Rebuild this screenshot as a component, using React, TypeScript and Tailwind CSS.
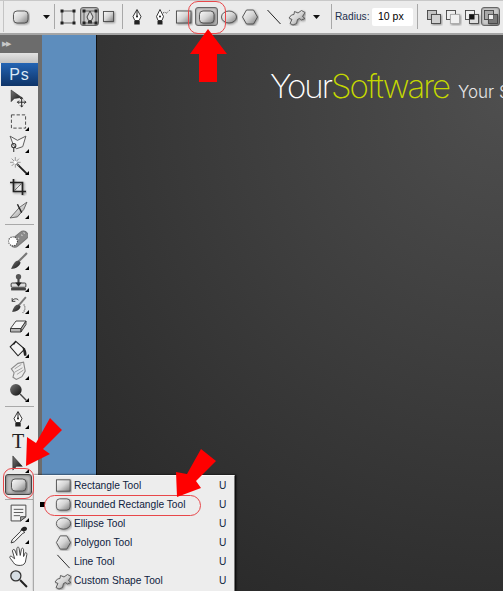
import React from "react";

const Defs = () => (
  <svg width="0" height="0" className="absolute">
    <defs>
      <linearGradient id="sh" x1="0" y1="0" x2="1" y2="1">
        <stop offset="0" stopColor="#fbfbfb" />
        <stop offset="0.5" stopColor="#d4d4d4" />
        <stop offset="1" stopColor="#7d7d7d" />
      </linearGradient>
      <linearGradient id="dk" x1="0" y1="0" x2="1" y2="1">
        <stop offset="0" stopColor="#777" />
        <stop offset="1" stopColor="#111" />
      </linearGradient>
    </defs>
  </svg>
);

type IP = { s?: number };
const Ic = ({ s = 18, children }: { s?: number; children: React.ReactNode }) => (
  <svg width={s} height={s} viewBox="0 0 18 18" className="block shrink-0">
    {children}
  </svg>
);
const sd = { filter: "drop-shadow(1px 1px 1px rgba(0,0,0,.4))" };
const edge = "#4a4a4a";

const RoundRect = ({ s = 18 }: IP) => (
  <Ic s={s}><rect x="1.500" y="3" width="14.500" height="12" rx="3.500" fill="url(#sh)" stroke={edge} strokeWidth=".9" style={sd} /></Ic>
);
const Rect = ({ s = 18 }: IP) => (
  <Ic s={s}><rect x="1.500" y="3" width="14.500" height="12" fill="url(#sh)" stroke={edge} strokeWidth=".9" style={sd} /></Ic>
);
const Ellipse = ({ s = 18 }: IP) => (
  <Ic s={s}><ellipse cx="9" cy="9" rx="7.500" ry="6" fill="url(#sh)" stroke={edge} strokeWidth=".9" style={sd} /></Ic>
);
const Polygon = ({ s = 18 }: IP) => (
  <Ic s={s}><path d="M5.500 2h7L16.500 9l-4 7h-7L1.500 9z" fill="url(#sh)" stroke={edge} strokeWidth=".9" style={sd} /></Ic>
);
const Line = ({ s = 18 }: IP) => (
  <Ic s={s}><path d="M2.500 2L15.500 16" stroke="#222" strokeWidth="1" /></Ic>
);
const Custom = ({ s = 18 }: IP) => (
  <Ic s={s}><path d="M6.500 3.500l3.500 1.500 3.500-2.500 3.500 2-2.500 4 2.500 2-3.500 1.500-2-1.500-2 1-1 4-3.500 1.500-3-1.500 2-4-3-1.500 2.500-3 2.500-.5z" fill="url(#sh)" stroke="#555" strokeWidth=".9" style={sd} /></Ic>
);
const Pen = ({ s = 18 }: IP) => (
  <Ic s={s}>
    <path d="M9 1.500L5 8.500 6.800 12.500h4.400L13 8.500z" fill="#fff" stroke="#222" strokeWidth=".9" />
    <path d="M9 2v6" stroke="#222" />
    <circle cx="9" cy="8.500" r="1" fill="#111" />
    <rect x="6.300" y="13" width="5.400" height="3.500" fill="#222" />
  </Ic>
);
const Freeform = () => (
  <Ic>
    <path d="M7 1.500L3.500 8.500 5 12.500h4l1.500-4z" fill="#fff" stroke="#222" strokeWidth=".9" />
    <circle cx="7" cy="8.500" r="1" fill="#111" />
    <rect x="4.500" y="13" width="5" height="3.500" fill="#222" />
    <path d="M10 5l2-1 1 1.500 4-3.500" stroke="#444" strokeDasharray="1 1" fill="none" />
  </Ic>
);
const Caret = () => (
  <svg width="7" height="4" viewBox="0 0 7 4" className="block"><path d="M0 0h7L3.500 4z" fill="#111" /></svg>
);
const handles = [[1.500, 1.500], [13.500, 1.500], [1.500, 13.500], [13.500, 13.500]];
const TransformA = () => (
  <Ic>
    <rect x="3" y="3" width="12" height="12" fill="#e4e4e4" stroke="#555" strokeWidth=".9" />
    {handles.map(([x, y], i) => <rect key={i} x={x} y={y} width="3" height="3" fill="#222" />)}
  </Ic>
);
const TransformB = () => (
  <Ic>
    <rect x="3" y="3" width="12" height="12" fill="none" stroke="#555" strokeWidth=".9" />
    <path d="M9 3L6 9l1.500 3.500h3L12 9z" fill="#ddd" stroke="#333" strokeWidth=".9" />
    <rect x="7" y="13" width="4" height="2.500" fill="#333" />
    {handles.map(([x, y], i) => <rect key={i} x={x} y={y} width="3" height="3" fill="#222" />)}
  </Ic>
);
const SquareSm = () => (
  <Ic><rect x="3.500" y="3.500" width="10" height="10" fill="url(#sh)" stroke={edge} strokeWidth=".9" style={sd} /></Ic>
);
const Combine = ({ v }: { v: number }) => (
  <Ic>
    <rect x="2.500" y="2.500" width="9" height="9" fill={v === 0 ? "#c4c4c4" : v === 3 ? "#aaa" : "#eee"} stroke="#444" strokeWidth=".9" />
    <rect x="6.500" y="6.500" width="9" height="9" fill={v === 1 ? "#f0f0f0" : v === 3 ? "#777" : v === 2 ? "#ddd" : "#d0d0d0"} stroke={v === 1 ? "#aaa" : "#444"} strokeWidth=".9" style={sd} />
    {v === 2 && <rect x="6.500" y="6.500" width="5" height="5" fill="#111" />}
    {v === 3 && <rect x="6.500" y="6.500" width="5" height="5" fill="#eee" stroke="#333" strokeWidth=".6" />}
  </Ic>
);

const Slot = ({ w, children, sel }: { w: string; children: React.ReactNode; sel?: boolean }) => (
  <div className={`flex h-full items-center justify-center ${w}`}>
    {sel ? (
      <div className="flex h-[19px] w-full items-center justify-center rounded-[3px] border border-[#666] bg-[#c9c9c9] shadow-[inset_0_0_2px_#666]">{children}</div>
    ) : children}
  </div>
);
const Sep = () => <div className="h-[25px] w-px shrink-0 bg-[#a8a8a8]" />;

const Small = () => (
  <span className="absolute bottom-[1px] right-[9px] h-0 w-0 border-b-[4px] border-l-[4px] border-b-black border-l-transparent" />
);

const Tool = ({ h, children, more = true }: { h: string; children: React.ReactNode; more?: boolean }) => (
  <div className={`relative flex w-full items-center justify-center pr-[2px] ${h}`}>
    {children}
    {more && <Small />}
  </div>
);
const ToolSep = ({ m }: { m: string }) => <div className={`ml-[5px] mr-[4px] h-px shrink-0 bg-[#a9a9a9] ${m}`} />;

const MoveIcon = () => (
  <Ic s={19}>
    <path d="M2 1v11l3-3 7-1z" fill="url(#dk)" stroke="#222" strokeWidth=".5" />
    <path d="M12 8v9M8 12.500h8M12 8l-1.500 1.500M12 8l1.500 1.500M12 17l-1.500-1.500M12 17l1.500-1.500M8 12.500l1.500-1.500M8 12.500l1.500 1.500M16 12.500l-1.500-1.500M16 12.500l-1.500 1.500" stroke="#222" fill="none" strokeWidth=".9" />
  </Ic>
);
const Marquee = () => (
  <Ic s={17}><rect x="1.500" y="2" width="15" height="14" fill="none" stroke="#444" strokeDasharray="3.500 2" /></Ic>
);
const Lasso = () => (
  <Ic s={19}>
    <path d="M1 2l7 4 8-4-3 10-6 2-3-4z" fill="#f4f4f4" stroke="#555" strokeWidth=".9" />
    <circle cx="4.500" cy="11" r="2" fill="none" stroke="#333" />
    <path d="M4.500 13v4" stroke="#333" />
  </Ic>
);
const Wand = () => (
  <Ic s={19}>
    <path d="M7.500 7.500l9.500 9.500" stroke="#222" strokeWidth="1.800" />
    <path d="M6 1v10M1 6h10M2.500 2.500l7 7M9.500 2.500l-7 7" stroke="#8a8a8a" strokeWidth=".8" />
    <circle cx="6" cy="6" r="1.500" fill="#fff" />
  </Ic>
);
const Crop = () => (
  <Ic s={18}>
    <path d="M1 4.500h12.500v12.500M4.500 1v12.500h12.500" stroke="#222" strokeWidth="1.700" fill="none" style={sd} />
    <path d="M5.500 12.500l7-7" stroke="#555" strokeWidth=".8" />
  </Ic>
);
const Slice = () => (
  <Ic s={19}>
    <path d="M1 17L10 7l7-5-3 7-6 7z" fill="url(#sh)" stroke="#555" strokeWidth=".8" />
    <path d="M8 4l4 8" stroke="#222" strokeWidth="1.300" />
  </Ic>
);
const Heal = () => (
  <Ic s={20}>
    <rect x="1" y="6" width="18" height="8" rx="4" fill="#8a8a8a" stroke="#777" transform="rotate(-40 10 10)" />
    <path d="M6 11l1 1M9 9l1 1M12 6l1 1M14 4l1 1" stroke="#d0d0d0" />
    <circle cx="4.500" cy="12" r="4" fill="#fff" stroke="#444" strokeDasharray="1 1" />
  </Ic>
);
const Brush = () => (
  <Ic s={19}>
    <path d="M17 2L9 10" stroke="#777" strokeWidth="2" />
    <path d="M9 9c-3 0-5 3-7 8 4 0 8-2 9-6z" fill="url(#dk)" />
  </Ic>
);
const Stamp = () => (
  <Ic s={19}>
    <circle cx="9" cy="3.500" r="2.500" fill="#555" />
    <path d="M8 5.500h2v4H8z" fill="#444" />
    <rect x="2" y="9.500" width="14" height="4" rx="1" fill="#ddd" stroke="#333" strokeWidth=".9" />
    <path d="M6 9h6l-3 4z" fill="#222" />
    <rect x="2" y="14" width="14" height="2.500" fill="#444" />
  </Ic>
);
const History = () => (
  <Ic s={19}>
    <path d="M16 2L9 10" stroke="#777" strokeWidth="1.800" />
    <path d="M9 9c-3 0-5 3-6 7 4 0 7-1.500 8-5z" fill="url(#dk)" />
    <path d="M3 6c1-3 5-3 6-1M3 6l3 0M3 6l0-3" stroke="#333" fill="none" strokeWidth=".9" />
    <path d="M14 9c2 3 1 6-1 8" stroke="#444" strokeDasharray="1 1" fill="none" />
  </Ic>
);
const Eraser = () => (
  <Ic s={18}>
    <path d="M7 4h10l-5 7.500H1.500z" fill="#f5f5f5" stroke="#333" strokeWidth=".9" />
    <path d="M1.500 11.500H12V15H1.500zM12 11.500L17 4v3.500L12 15z" fill="#b5b5b5" stroke="#333" strokeWidth=".9" />
  </Ic>
);
const Bucket = () => (
  <Ic s={20}>
    <path d="M7 3l8 7-6 6-7-8z" fill="#f4f4f4" stroke="#222" />
    <path d="M7 3L5 6" stroke="#222" />
    <path d="M13 8c3 1 4 5 3.500 8h-2z" fill="#222" />
  </Ic>
);
const Smudge = () => (
  <Ic s={20}>
    <path d="M14 2l1.500 8-3 5-5 2.500-3-2 1-4L3 8l6-5z" fill="#ececec" stroke="#8a8a8a" />
    <path d="M6 8l6-4M6 11l7-4M8 13l6-4" stroke="#999" strokeWidth=".8" />
  </Ic>
);
const Burn = () => (
  <Ic s={19}>
    <circle cx="6.500" cy="6.500" r="5.500" fill="url(#dk)" />
    <path d="M10.500 10.500l6 6" stroke="#444" strokeWidth="1.300" />
  </Ic>
);
const Arrow = () => (
  <Ic s={17}><path d="M3 1v15l4-4 6 0z" fill="url(#dk)" stroke="#222" strokeWidth=".6" /></Ic>
);
const Notes = () => (
  <Ic s={19}>
    <path d="M2 2h14v11l-5 4H2z" fill="#f2f2f2" stroke="#444" strokeWidth=".9" />
    <path d="M4.500 6h9M4.500 9h9M4.500 12h6" stroke="#555" strokeWidth=".9" />
    <path d="M11 17v-4h5z" fill="#aaa" stroke="#444" strokeWidth=".9" />
  </Ic>
);
const Dropper = () => (
  <Ic s={19}>
    <path d="M12 4l3 3-2 1-8 8-3 1 1-3 8-8z" fill="#f2f2f2" stroke="#333" strokeWidth=".9" />
    <path d="M11 5c1-3 3-4 5-3s1 4-2 4z" fill="#222" />
  </Ic>
);
const Hand = () => (
  <Ic s={20}>
    <path d="M4 10c-2-2-3 0-2 1l3 4c1 2 3 2.500 6 2.500 3 0 5-2 5-5l1-5c0-2-2-2-2 0l-1 2 0-6c0-2-2-2-2 0l-1 5-1-6c0-2-2-2-2 0l0 6-2-5c-1-1-2 0-2 1l2 7z" fill="#fff" stroke="#333" strokeWidth=".8" />
  </Ic>
);
const Zoom = () => (
  <Ic s={19}>
    <circle cx="6.500" cy="6.500" r="4.800" fill="#d5dde3" stroke="#333" strokeWidth="1.200" />
    <path d="M10.500 10.500l6.500 6.500" stroke="#222" strokeWidth="1.900" />
  </Ic>
);

const menu: [string, React.ReactNode][] = [
  ["Rectangle Tool", <Rect s={17} />],
  ["Rounded Rectangle Tool", <RoundRect s={17} />],
  ["Ellipse Tool", <Ellipse s={17} />],
  ["Polygon Tool", <Polygon s={17} />],
  ["Line Tool", <Line s={17} />],
  ["Custom Shape Tool", <Custom s={18} />],
];

export default function App() {
  return (
    <div className="relative flex h-[591px] w-[503px] flex-col overflow-hidden bg-[#333] font-['Liberation_Sans',sans-serif]">
      <Defs />
      {/* options bar */}
      <div className="flex h-[35px] shrink-0 items-center border-t border-b-2 border-t-[#c8c8c8] border-b-[#a5a5a5] bg-[#ebebeb] pb-px">
        <Slot w="w-[4px] border-r border-[#c4c4c4]"><span /></Slot>
        <Slot w="w-[34px]"><RoundRect /></Slot>
        <Slot w="w-[16px]"><Caret /></Slot>
        <Sep />
        <Slot w="w-[25px]"><TransformA /></Slot>
        <Slot w="w-[19px]" sel><TransformB /></Slot>
        <Slot w="w-[19px]"><SquareSm /></Slot>
        <div className="w-[4px]" />
        <Sep />
        <Slot w="w-[28px]"><Pen /></Slot>
        <Slot w="w-[22px]"><Freeform /></Slot>
        <Slot w="w-[22px]"><Rect /></Slot>
        <Slot w="w-[23px]" sel><RoundRect /></Slot>
        <Slot w="w-[21px]"><Ellipse /></Slot>
        <Slot w="w-[22px]"><Polygon /></Slot>
        <Slot w="w-[25px]"><Line /></Slot>
        <Slot w="w-[22px]"><Custom /></Slot>
        <Slot w="w-[17px]"><Caret /></Slot>
        <div className="w-[6px]" />
        <Sep />
        <span className="ml-[3px] w-[37px] text-[10.200px] text-[#1c2f4d]">Radius:</span>
        <div className="flex h-[18px] w-[41px] items-center rounded-[2px] bg-white pl-[6px] text-[10.500px] text-black">10 px</div>
        <div className="w-[4px]" />
        <Sep />
        <div className="w-[6px]" />
        <Slot w="w-[19px]"><Combine v={0} /></Slot>
        <Slot w="w-[19px]"><Combine v={1} /></Slot>
        <Slot w="w-[19px]"><Combine v={2} /></Slot>
        <Slot w="w-[19px]" sel><Combine v={3} /></Slot>
      </div>

      <div className="flex min-h-0 flex-1">
        {/* tool palette */}
        <div className="flex w-[42px] shrink-0 flex-col bg-[#6c6c6c]">
          <div className="flex h-[18px] shrink-0 items-center pl-[2px] text-[7px] tracking-[-1px] text-[#c8c8c8]">▶▶</div>
          <div className="flex w-[38px] flex-1 flex-col bg-[#ececec]">
            <div className="h-[10px] shrink-0 bg-gradient-to-b from-[#e2e2e2] to-[#c2c2c2]" />
            <div className="ml-px flex h-[23px] shrink-0 items-center justify-center bg-gradient-to-b from-[#2364b4] to-[#0e3468] text-[16px] tracking-[1px] text-[#dbe8f6]">Ps</div>
            <Tool h="h-[24px]" more={false}><MoveIcon /></Tool>
            <Tool h="h-[22px]"><Marquee /></Tool>
            <Tool h="h-[22px]"><Lasso /></Tool>
            <Tool h="h-[22px]"><Wand /></Tool>
            <Tool h="h-[22px]" more={false}><Crop /></Tool>
            <Tool h="h-[22px]"><Slice /></Tool>
            <ToolSep m="mt-[4px] mb-[2px]" />
            <Tool h="h-[22px]"><Heal /></Tool>
            <Tool h="h-[22px]"><Brush /></Tool>
            <Tool h="h-[22px]"><Stamp /></Tool>
            <Tool h="h-[22px]"><History /></Tool>
            <Tool h="h-[22px]"><Eraser /></Tool>
            <Tool h="h-[22px]"><Bucket /></Tool>
            <Tool h="h-[22px]"><Smudge /></Tool>
            <Tool h="h-[22px]"><Burn /></Tool>
            <ToolSep m="mt-[3px] mb-[1px]" />
            <Tool h="h-[22px]"><Pen /></Tool>
            <Tool h="h-[22px]" more={false}><span className="font-['Liberation_Serif',serif] text-[20px] leading-none text-[#222]">T</span></Tool>
            <Tool h="h-[22px]"><Arrow /></Tool>
            <div className="ml-[5px] mr-[6px] flex h-[21px] shrink-0 items-center justify-center rounded-[3px] border border-[#444] bg-[#bdbdbd] shadow-[inset_0_0_3px_#555]"><RoundRect /></div>
            <ToolSep m="mt-[4px] mb-[1px]" />
            <Tool h="h-[22px]"><Notes /></Tool>
            <Tool h="h-[22px]"><Dropper /></Tool>
            <Tool h="h-[22px]" more={false}><Hand /></Tool>
            <Tool h="h-[22px]" more={false}><Zoom /></Tool>
          </div>
        </div>
        {/* blue strip */}
        <div className="w-[55px] shrink-0 border-r border-[#111] bg-[#5d8dbd]" />
        {/* dark document */}
        <div className="min-w-0 flex-1 overflow-hidden bg-[radial-gradient(ellipse_560px_570px_at_100%_12%,#4e4e4e_0%,#3d3d3d_48%,#2a2a2a_100%)] pl-[173px] pt-[30px]">
          <div className="flex items-baseline whitespace-nowrap font-['Inter',sans-serif] font-extralight text-white">
            <span className="text-[33px] leading-[42px] tracking-[-2px]">Your</span>
            <span className="text-[33px] leading-[42px] tracking-[-2px] text-[#c5d800]">Software</span>
            <span className="ml-[9px] text-[17px] font-light text-[#e6e6e6]">Your S</span>
          </div>
        </div>
      </div>

      {/* flyout menu */}
      <div className="absolute left-[33px] top-[475px] h-[116px] w-[202px] border-t border-l border-r border-t-[#fafafa] border-r-[#777] border-l-[#aaa] bg-[#ededed] shadow-[1px_0_2px_#000]">
        <div className="flex flex-col">
          {menu.map(([t, ic], i) => (
            <div key={t} className="relative flex h-[19px] items-center text-[10.200px] text-[#0f2240]">
              {i === 1 && <span className="absolute left-[6px] top-[7px] h-[5px] w-[5px] bg-black" />}
              <span className="flex w-[38px] justify-end">{ic}</span>
              <span className="ml-[2px] flex-1">{t}</span>
              <span className="w-[15px]">U</span>
            </div>
          ))}
        </div>
      </div>

      {/* red annotations */}
      <div className="absolute left-[188px] top-[1px] h-[33px] w-[38px] rounded-[10px] border border-[#e8474a]" />
      <div className="absolute left-[3px] top-[468px] h-[31px] w-[31px] rounded-[9px] border border-[#e8474a]" />
      <div className="absolute left-[44px] top-[495px] h-[21px] w-[157px] rounded-full border border-[#e8474a]" />
      <svg width="503" height="591" className="pointer-events-none absolute left-0 top-0">
        <polygon points="208,29 227,54 217,54 217,82 199,82 199,54 190,54" fill="#ff0000" />
        <polygon points="26,466 27,437 36,443 50,418 62,430 43,449 50,454" fill="#ff0000" />
        <polygon points="177,497 176,472 187,474 201,449 216,461 196,481 201,488" fill="#ff0000" />
      </svg>
    </div>
  );
}
